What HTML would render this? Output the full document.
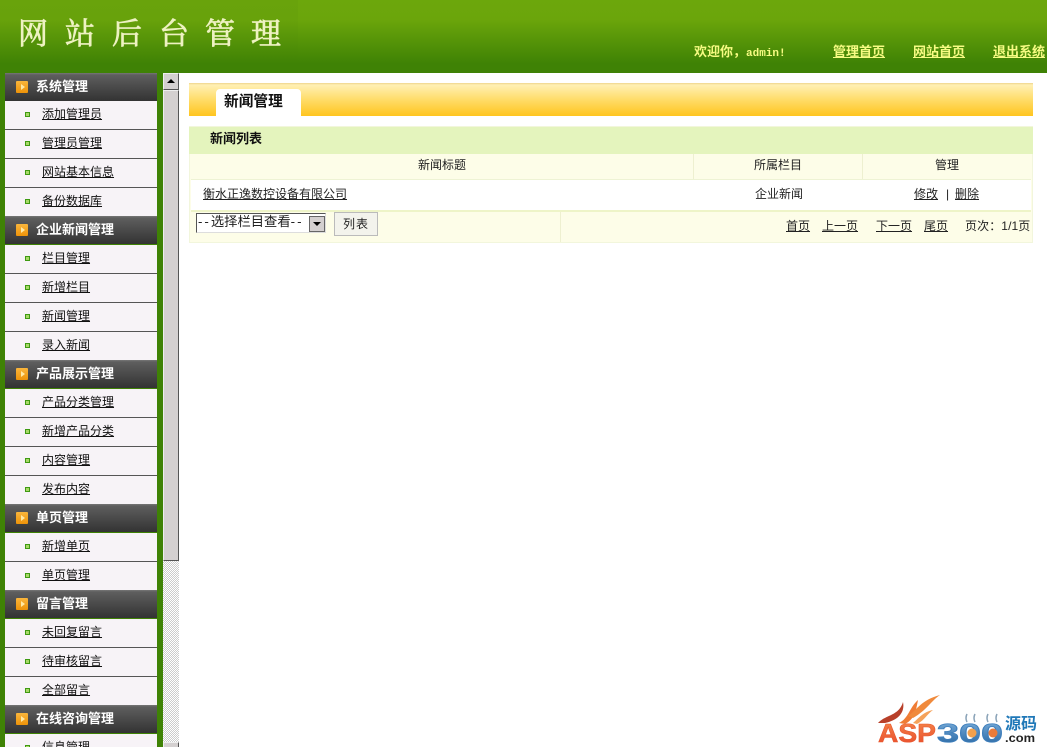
<!DOCTYPE html>
<html lang="zh">
<head>
<meta charset="utf-8">
<title>网站后台管理</title>
<style>
html,body{margin:0;padding:0;width:1047px;height:747px;overflow:hidden;background:#fff}
body{position:relative;font:12px/14px "Liberation Sans","WenQuanYi Zen Hei","Noto Sans CJK SC",sans-serif;color:#222}
a{color:inherit;text-decoration:underline}
.a{position:absolute;white-space:nowrap}
#hd{position:absolute;left:0;top:0;width:1047px;height:73px;background:linear-gradient(#6ca70c 0,#6ba50b 20px,#3f8205 64px,#3f8205 100%)}
#lg{position:absolute;left:0;top:0;width:298px;height:73px;background:linear-gradient(#69a30c 0,#68a20b 20px,#3f8205 64px)}
#lg span{position:absolute;top:12px;font:30px/38px "Noto Serif CJK SC",serif;color:#eef2c2;-webkit-text-stroke:.7px #eef2c2}
.top{position:absolute;top:44px;font-weight:bold;color:#f7fb83;font-size:13px;line-height:15px;white-space:nowrap}
#side{position:absolute;left:0;top:73px;width:163px;height:674px;background:#3f8205;overflow:hidden}
.s{position:absolute;left:5px;width:152px;height:28px;background:linear-gradient(#777 0,#5e5e5e 2px,#4a4a4a 14px,#333 100%);color:#fff;font-weight:bold;font-size:13px;line-height:27px}
.s b{position:absolute;left:31px;top:0;font-weight:bold}
.s i{position:absolute;left:11px;top:8px;width:12px;height:12px;background:linear-gradient(#f9b53c,#ee9309);border-radius:1px}
.s i:after{content:"";position:absolute;left:5px;top:3px;border-left:4px solid #ffe9a5;border-top:3px solid transparent;border-bottom:3px solid transparent}
.m{position:absolute;left:5px;width:152px;height:28px;background:#f7f3f7;border-bottom:1px solid #555;color:#111}
.m.l{border-bottom:0}
.m i{position:absolute;left:20px;top:11px;width:3px;height:3px;border:1px solid #3f9a12;background:#a8d868}
.m a{position:absolute;left:37px;top:6px;white-space:nowrap}
#sb{position:absolute;left:163px;top:73px;width:16px;height:674px;background-color:#e9e9e9;background-image:repeating-conic-gradient(#ccc 0 25%,#fff 0 50%);background-size:2px 2px}
#sb .t{position:absolute;left:0;top:0;width:14px;height:15px;background:#d4d0d0;border:1px solid #eee;border-right-color:#555;border-bottom-color:#555}
#sb .t:after{content:"";position:absolute;left:3px;top:5px;border-bottom:4px solid #000;border-left:4px solid transparent;border-right:4px solid transparent}
#sb .th{position:absolute;left:0;top:17px;width:14px;height:469px;background:#d4d0d0;border:1px solid #eee;border-right-color:#555;border-bottom-color:#555}
#sb .bt{position:absolute;left:0;top:669px;width:14px;height:10px;background:#d4d0d0;border:1px solid #eee;border-right-color:#555}
#bar{position:absolute;left:189px;top:83px;width:844px;height:33px;background:linear-gradient(#eed48c 0,#fff0b4 2px,#ffdd6c 16px,#ffc51f 100%)}
#tab{position:absolute;left:216px;top:89px;width:85px;height:27px;background:#fff;border-radius:4px 4px 0 0;font-weight:bold;font-size:14.7px;line-height:27px;color:#111;text-indent:8px}
#tb{position:absolute;left:189px;top:126px;width:844px;height:117px;background:#fdfde8;box-shadow:inset 0 0 0 1px #f2f6dc}
#tb1{position:absolute;left:0;top:1px;width:844px;height:27px;background:#e4f4bd}
</style>
</head>
<body>
<div id="hd"></div>
<div id="lg">
<span style="left:18px">网</span><span style="left:65px">站</span><span style="left:112px">后</span><span style="left:159px">台</span><span style="left:205px">管</span><span style="left:251px">理</span>
</div>
<div class="top" style="left:694px">欢迎你，<span style="font-family:'Liberation Mono',monospace;font-size:11px">admin!</span></div>
<a class="top" href="#" style="left:833px">管理首页</a>
<a class="top" href="#" style="left:913px">网站首页</a>
<a class="top" href="#" style="left:993px">退出系统</a>

<div id="side">
<div class="s" style="top:0"><i></i><b>系统管理</b></div>
<div class="m" style="top:28px"><i></i><a href="#">添加管理员</a></div>
<div class="m" style="top:57px"><i></i><a href="#">管理员管理</a></div>
<div class="m" style="top:86px"><i></i><a href="#">网站基本信息</a></div>
<div class="m l" style="top:115px"><i></i><a href="#">备份数据库</a></div>
<div class="s" style="top:143px"><i></i><b>企业新闻管理</b></div>
<div class="m" style="top:172px"><i></i><a href="#">栏目管理</a></div>
<div class="m" style="top:201px"><i></i><a href="#">新增栏目</a></div>
<div class="m" style="top:230px"><i></i><a href="#">新闻管理</a></div>
<div class="m l" style="top:259px"><i></i><a href="#">录入新闻</a></div>
<div class="s" style="top:287px"><i></i><b>产品展示管理</b></div>
<div class="m" style="top:316px"><i></i><a href="#">产品分类管理</a></div>
<div class="m" style="top:345px"><i></i><a href="#">新增产品分类</a></div>
<div class="m" style="top:374px"><i></i><a href="#">内容管理</a></div>
<div class="m l" style="top:403px"><i></i><a href="#">发布内容</a></div>
<div class="s" style="top:431px"><i></i><b>单页管理</b></div>
<div class="m" style="top:460px"><i></i><a href="#">新增单页</a></div>
<div class="m l" style="top:489px"><i></i><a href="#">单页管理</a></div>
<div class="s" style="top:517px"><i></i><b>留言管理</b></div>
<div class="m" style="top:546px"><i></i><a href="#">未回复留言</a></div>
<div class="m" style="top:575px"><i></i><a href="#">待审核留言</a></div>
<div class="m l" style="top:604px"><i></i><a href="#">全部留言</a></div>
<div class="s" style="top:632px"><i></i><b>在线咨询管理</b></div>
<div class="m l" style="top:661px"><i></i><a href="#">信息管理</a></div>
</div>

<div id="sb"><div class="t"></div><div class="th"></div><div class="bt"></div></div>

<div id="bar"></div>
<div id="tab">新闻管理</div>

<div id="tb"><div id="tb1"></div></div>
<div class="a" style="left:210px;top:132px;font-weight:bold;font-size:13px;color:#111">新闻列表</div>
<div class="a" style="left:191px;top:180px;width:840px;height:30px;background:#fff"></div>
<div class="a" style="left:191px;top:179px;width:840px;height:1px;background:#eef3d4"></div>
<div class="a" style="left:191px;top:210px;width:840px;height:2px;background:#eef4c8"></div>
<div class="a" style="left:693px;top:154px;width:1px;height:25px;background:#eef0d0"></div>
<div class="a" style="left:862px;top:154px;width:1px;height:25px;background:#eef0d0"></div>
<div class="a" style="left:560px;top:212px;width:1px;height:30px;background:#eef0d0"></div>
<div class="a" style="left:418px;top:158px">新闻标题</div>
<div class="a" style="left:754px;top:158px">所属栏目</div>
<div class="a" style="left:935px;top:158px">管理</div>
<a class="a" href="#" style="left:203px;top:187px">衡水正逸数控设备有限公司</a>
<div class="a" style="left:755px;top:187px">企业新闻</div>
<a class="a" href="#" style="left:914px;top:187px">修改</a>
<div class="a" style="left:946px;top:187px">|</div>
<a class="a" href="#" style="left:955px;top:187px">删除</a>

<div class="a" style="left:196px;top:213px;width:130px;height:20px;box-sizing:border-box;background:#fff;border:1px solid;border-color:#555 #ddd #ddd #555;line-height:16px;font-size:13.3px;padding-left:1px;overflow:hidden"><span style="letter-spacing:2px">--</span>选择栏目查看<span style="letter-spacing:2px">--</span>
<span style="position:absolute;right:0;top:2px;width:16px;height:16px;background:#d4d0d0;border:1px solid #666;box-sizing:border-box"><span style="position:absolute;left:3px;top:5px;border-top:4px solid #000;border-left:4px solid transparent;border-right:4px solid transparent"></span></span></div>
<div class="a" style="left:334px;top:212px;width:44px;height:24px;box-sizing:border-box;background:#f3f3ec;border:1px solid #bbb;text-align:center;line-height:22px;letter-spacing:1px">列表</div>

<a class="a" href="#" style="left:786px;top:219px">首页</a>
<a class="a" href="#" style="left:822px;top:219px">上一页</a>
<a class="a" href="#" style="left:876px;top:219px">下一页</a>
<a class="a" href="#" style="left:924px;top:219px">尾页</a>
<div class="a" style="left:965px;top:219px;letter-spacing:.1px">页次：1/1页</div>

<svg class="a" style="left:875px;top:692px" width="172" height="55" viewBox="0 0 172 55">
<defs>
<linearGradient id="o" x1="0" y1="0" x2="0" y2="1"><stop offset="0" stop-color="#f58a4c"/><stop offset="1" stop-color="#e8482a"/></linearGradient>
<linearGradient id="bl" x1="0" y1="0" x2="0" y2="1"><stop offset="0" stop-color="#7fb2de"/><stop offset="1" stop-color="#23629f"/></linearGradient>
</defs>
<path d="M3 31C10 23 24 24 28 10C30 20 24 28 10 31Z" fill="#b8402a"/>
<path d="M24 31C34 26 34 16 43 8C41 18 40 27 30 32Z" fill="#ef7c35"/>
<path d="M33 24C42 18 46 8 65 3C56 9 52 18 38 26Z" fill="#f08a3c"/>
<path d="M38 31C44 26 48 20 58 18C52 22 50 28 42 32Z" fill="#f5a25a"/>
<text x="3" y="50" font-family="Liberation Sans,sans-serif" font-weight="bold" font-size="26" textLength="58" lengthAdjust="spacingAndGlyphs" fill="url(#o)" stroke="#e8582f" stroke-width=".6">ASP</text>
<text x="62" y="50" font-family="Liberation Sans,sans-serif" font-weight="bold" font-size="26" textLength="66" lengthAdjust="spacingAndGlyphs" fill="url(#bl)" stroke="#3f7fbc" stroke-width=".8">300</text>
<circle cx="97" cy="41" r="4.5" fill="#f2a04c"/><circle cx="118" cy="41" r="4.5" fill="#ea7b3a"/>
<path d="M92 30q-2-4 0-8M100 30q-2-4 0-8M113 30q-2-4 0-8M122 30q-2-4 0-8" stroke="#8aa3b8" stroke-width="1.5" fill="none"/>
<text x="130" y="37" font-family="Noto Sans CJK SC,sans-serif" font-weight="bold" font-size="16" fill="#1f78b8">源码</text>
<text x="130" y="50" font-family="Liberation Sans,sans-serif" font-weight="bold" font-size="12" textLength="30" lengthAdjust="spacingAndGlyphs" fill="#222">.com</text>
</svg>
</body>
</html>
